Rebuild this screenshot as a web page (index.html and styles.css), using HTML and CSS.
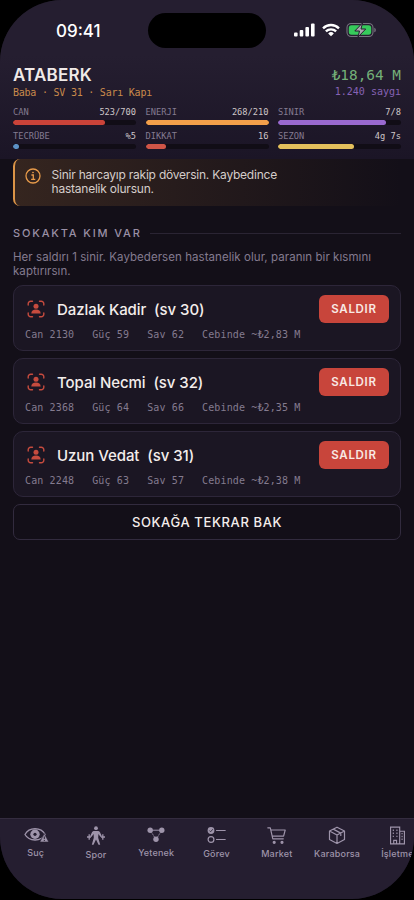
FILE: index.html
```html
<!DOCTYPE html>
<html lang="tr">
<head>
<meta charset="utf-8">
<meta name="viewport" content="width=device-width, initial-scale=1">
<title>Sokak</title>
<link rel="stylesheet" href="styles.css">
</head>
<body>
<svg width="0" height="0" class="defs">
  <symbol id="target" viewBox="0 0 18 18">
    <g fill="none" stroke="currentColor" stroke-width="1.4" stroke-linecap="round">
      <path d="M1.2 5V3.7a2.5 2.5 0 0 1 2.5-2.5H5.500M12.500 1.2h1.8a2.5 2.5 0 0 1 2.5 2.5V5M16.800 13v1.300a2.500 2.500 0 0 1-2.500 2.500H12.500M5.500 16.800H3.700a2.500 2.500 0 0 1-2.500-2.500V13"/>
    </g>
    <circle cx="9" cy="6.300" r="2.500" fill="currentColor"/>
    <path d="M4.300 13.500c0-2.600 1.900-4 4.700-4s4.700 1.400 4.700 4z" fill="currentColor"/>
  </symbol>
</svg>
<div class="phone">
  <header class="top">
    <div class="status">
      <span class="clock">09:41</span>
      <span class="island"></span>
      <span class="signals">
        <svg width="21" height="14" viewBox="0 0 21 14" fill="#fff"><rect x="0" y="9.500" width="3.600" height="4" rx="1"/><rect x="5.700" y="7" width="3.600" height="6.500" rx="1"/><rect x="11.400" y="4" width="3.600" height="9.500" rx="1"/><rect x="17" y="0.500" width="3.600" height="13" rx="1"/></svg>
        <svg width="18" height="14" viewBox="0 0 19 14"><g fill="none" stroke="#fff" stroke-width="2.500"><path d="M1.100 5.200a12 12 0 0 1 16.800 0"/><path d="M4.100 8.500a7.700 7.700 0 0 1 10.800 0"/></g><path d="M9.500 13.500 6.500 10.700a4.300 4.300 0 0 1 6 0z" fill="#fff"/></svg>
        <svg width="31" height="16" viewBox="0 0 31 16"><rect x="1" y="1.500" width="26" height="13" rx="4.200" fill="none" stroke="#77717f" stroke-width="1.100"/><rect x="2.800" y="3.200" width="22.400" height="9.600" rx="2.700" fill="#36ca5b"/><path d="M28.300 5.700c2 .6 2 4 0 4.600z" fill="#77717f"/><path d="M16.500 1 8.800 9h4.700L12 15l7.700-8H15z" fill="#aaa6ad" stroke="#251e30" stroke-width="1"/></svg>
      </span>
    </div>
    <div class="identity">
      <div><h1>ATABERK</h1><p class="rank">Baba · SV 31 · Sarı Kapı</p></div>
      <div class="wealth"><p class="cash">₺18,64 M</p><p class="respect">1.240 saygı</p></div>
    </div>
    <div class="meters">
      <div class="meter"><span>CAN</span><b>523/700</b><i><em class="red" style="width:75%"></em></i></div>
      <div class="meter"><span>ENERJI</span><b>268/210</b><i><em class="orange" style="width:100%"></em></i></div>
      <div class="meter"><span>SINIR</span><b>7/8</b><i><em class="purple" style="width:87.500%"></em></i></div>
      <div class="meter"><span>TECRÜBE</span><b>%5</b><i><em class="blue" style="width:5%"></em></i></div>
      <div class="meter"><span>DIKKAT</span><b>16</b><i><em class="coral" style="width:16.500%"></em></i></div>
      <div class="meter"><span>SEZON</span><b>4g 7s</b><i><em class="yellow" style="width:61.500%"></em></i></div>
    </div>
  </header>
  <main>
    <section class="notice">
      <svg width="16" height="16" viewBox="0 0 16 16" fill="none" stroke="#e79a4a" stroke-width="1.300"><circle cx="8" cy="8" r="7"/><path d="M6.400 7h1.900v4.300M6.100 11.400h4.200"/><circle cx="8" cy="4.500" r=".5" fill="#e79a4a" stroke-width=".8"/></svg>
      <p>Sinir harcayıp rakip döversin. Kaybedince<br>hastanelik olursun.</p>
    </section>
    <h2><span>SOKAKTA KIM VAR</span></h2>
    <p class="hint">Her saldırı 1 sinir. Kaybedersen hastanelik olur, paranın bir kısmını<br>kaptırırsın.</p>
    <div class="list">
      <article class="card">
        <div class="row"><svg width="18" height="18"><use href="#target"/></svg><h3>Dazlak Kadir&nbsp; (sv 30)</h3><button class="attack">SALDIR</button></div>
        <div class="stats"><span>Can 2130</span><span>Güç 59</span><span>Sav 62</span><span>Cebinde ~₺2,83 M</span></div>
      </article>
      <article class="card">
        <div class="row"><svg width="18" height="18"><use href="#target"/></svg><h3>Topal Necmi&nbsp; (sv 32)</h3><button class="attack">SALDIR</button></div>
        <div class="stats"><span>Can 2368</span><span>Güç 64</span><span>Sav 66</span><span>Cebinde ~₺2,35 M</span></div>
      </article>
      <article class="card">
        <div class="row"><svg width="18" height="18"><use href="#target"/></svg><h3>Uzun Vedat&nbsp; (sv 31)</h3><button class="attack">SALDIR</button></div>
        <div class="stats"><span>Can 2248</span><span>Güç 63</span><span>Sav 57</span><span>Cebinde ~₺2,38 M</span></div>
      </article>
      <button class="refresh">SOKAĞA TEKRAR BAK</button>
    </div>
  </main>
  <nav>
    <a class="h18"><svg width="26" height="18" viewBox="-1 0 26 18"><path d="M1 8.500C5 .8 17 .8 21.200 8.500 17 15.800 5 15.800 1 8.500z" fill="none" stroke="currentColor" stroke-width="1.300"/><circle cx="11" cy="8.300" r="4.700" fill="currentColor"/><circle cx="11" cy="8.300" r="1.600" fill="#251e30"/><path d="m20.300 7.600 4.500 8.400h-9z" fill="currentColor" stroke="#251e30" stroke-width=".6"/><path d="M20.300 10.500v2.600m0 .9v1" stroke="#251e30" stroke-width="1"/></svg><span>Suç</span></a>
    <a class="h20"><svg width="20" height="20" viewBox="0 0 20 20" fill="currentColor"><circle cx="10" cy="2.200" r="1.900"/><path d="M7.600 5h4.800q1.200.3 1.700 1.500l1.800 3.700-1.300.8-2.200-3-.2 3.700 2 7.100h-1.700L10 13.400 7.500 18.800H5.800l2-7.100-.2-3.700-2.200 3-1.300-.8 1.800-3.700Q6.400 5.300 7.600 5z"/><path d="M1 11h4M15 11h4M3.200 8.300v5.400M16.800 8.300v5.400" fill="none" stroke="currentColor" stroke-width="1.300"/></svg><span>Spor</span></a>
    <a class="h18"><svg width="18" height="18" viewBox="0 0 18 18" fill="currentColor"><circle cx="3.200" cy="4.200" r="2.700"/><circle cx="14.800" cy="4.200" r="2.700"/><circle cx="9" cy="13.200" r="2.700"/><path d="M5.500 4.200h7" stroke="currentColor" stroke-width="1"/><path d="m4.500 6.300 3 4.800m6-4.800-3 4.800" stroke="currentColor" stroke-width=".9" stroke-dasharray="1.500 .7"/></svg><span>Yetenek</span></a>
    <a class="h19"><svg width="19" height="19" viewBox="0 0 19 19"><circle cx="4" cy="4.500" r="3.400" fill="currentColor"/><path d="m2.400 4.500 1.200 1.300 2.200-2.600" fill="none" stroke="#251e30" stroke-width=".8"/><circle cx="4" cy="13.500" r="2.900" fill="none" stroke="currentColor" stroke-width="1.200"/><path d="M9.500 4.500h8.700M9.500 13.500h8.700" stroke="currentColor" stroke-width="1.200" stroke-linecap="round"/></svg><span>Görev</span></a>
    <a class="h19"><svg width="19" height="19" viewBox="0 0 19 19" fill="none" stroke="currentColor" stroke-width="1.200" stroke-linecap="round" stroke-linejoin="round"><path d="M.8 1.800h2.500l2.500 11h10.500M3.900 4h14.300l-1.600 6.200H5.200"/><circle cx="7.200" cy="16.300" r="1" fill="currentColor"/><circle cx="15" cy="16.300" r="1" fill="currentColor"/></svg><span>Market</span></a>
    <a class="h19"><svg width="18" height="19" viewBox="0 0 18 19" fill="none" stroke="currentColor" stroke-width="1.200" stroke-linejoin="round"><path d="M9 1.200 16.500 5v8.500L9 17.500 1.500 13.500V5zM1.500 5 9 9l7.500-4M9 9v8.500M5.200 3.100l7.600 4v3"/></svg><span>Karaborsa</span></a>
    <a class="h19"><svg width="17" height="20" viewBox="0 0 17 20" fill="none" stroke="currentColor" stroke-width="1.200"><path d="M1.200 18.800V1.200h9.600v17.600zM10.800 5.500h5v13.300h-5M4.500 18.500v-3.300h3v3.300"/><path d="M3.500 4.500h1.200m2.600 0h1.200m-5 3.200h1.200m2.600 0h1.200m-5 3.200h1.200m2.600 0h1.200m4.200-2.900h1.200m-1.200 3h1.200m-1.200 3h1.200" stroke-width="1.500"/></svg><span>İşletme</span></a>
  </nav>
</div>
</body>
</html>
```
FILE: styles.css
```css
* { box-sizing: border-box; margin: 0; padding: 0; }
body { background: #000; width: 414px; height: 900px; overflow: hidden; font-family: Inter, sans-serif; }
.defs { position: absolute; }
svg { display: block; flex: none; }
.phone { width: 414px; height: 899px; border-radius: 62px; overflow: hidden; background: #130f18; display: flex; flex-direction: column; }
.top { height: 159px; flex: none; padding: 0 13px; background: linear-gradient(#251e30 0, #251e30 35%, #1b1526 100%); }
.status { height: 65px; display: grid; grid-template-columns: 135px 118px 1fr; align-items: start; }
.clock { color: #fff; font-size: 17px; font-weight: 500; line-height: 20px; padding: 21px 0 0 43px; letter-spacing: 0; }
.island { height: 35px; margin-top: 13px; border-radius: 18px; background: #000; }
.signals { display: flex; align-items: center; gap: 6.500px; padding: 22px 0 0 28px; }
.identity { display: flex; justify-content: space-between; height: 41px; }
h1 { font-size: 17px; line-height: 21px; font-weight: 600; color: #f0eae8; letter-spacing: .2px; }
.rank, .wealth, .meter, .stats { font-family: "DejaVu Sans Mono", monospace; }
.rank { font-size: 10px; line-height: 13px; letter-spacing: -.23px; color: #c98a4b; }
.wealth { text-align: right; }
.cash { font-size: 14.400px; line-height: 21px; color: #74b078; }
.respect { font-size: 10px; line-height: 11px; color: #8662b5; }
.meters { display: grid; grid-template-columns: repeat(3, 1fr); column-gap: 9.500px; row-gap: 5px; }
.meter { display: grid; grid-template-columns: 1fr auto; font-size: 8.700px; line-height: 12px; row-gap: 2px; color: #847b91; }
.meter b { font-weight: 400; color: #cec6c8; }
.meter i { grid-column: 1 / 3; height: 5px; border-radius: 3px; background: #110d16; overflow: hidden; }
.meter em { display: block; height: 5px; border-radius: 3px; }
.red { background: #ca4339; } .orange { background: #f39f4a; } .purple { background: #9969cf; }
.blue { background: #5c91c5; } .coral { background: #cf5547; } .yellow { background: #e4c05c; }
main { flex: 1; padding: 0 13px; }
.notice { height: 47px; border-left: 2px solid #db9447; border-radius: 7px; background: linear-gradient(90deg, #35251f, #130f18); display: flex; gap: 10.500px; padding: 9px 0 0 10px; color: #d5cdca; font-size: 12px; line-height: 14.300px; letter-spacing: -.22px; }
h2 { display: flex; align-items: center; gap: 8px; margin-top: 20px; height: 14px; font-size: 11px; font-weight: 500; letter-spacing: 1.850px; color: #9a90a5; }
h2::after { content: ""; flex: 1; height: 1px; background: #2a2433; }
.hint { margin-top: 10px; height: 35px; font-size: 11.500px; line-height: 14px; letter-spacing: .06px; color: #847b8f; white-space: nowrap; }
.list { display: flex; flex-direction: column; gap: 7px; }
.card { height: 66px; border: 1px solid #2d2639; border-radius: 10px; background: #1b1623; padding: 9px 11px 0; }
.row { display: flex; align-items: center; height: 29px; padding-left: 2px; color: #c64b3e; }
.row svg { margin-top: -1px; }
h3 { flex: 1; padding-left: 12px; font-size: 15px; line-height: 18px; font-weight: 500; letter-spacing: -.07px; color: #f3edeb; }
.attack { width: 70px; height: 28px; margin-top: -1px; border: 0; border-radius: 6px; background: #c8453b; color: #f8e9e4; font: 600 11.500px Inter, sans-serif; letter-spacing: .7px; }
.stats { display: flex; gap: 18px; margin-top: 4px; font-size: 10px; line-height: 13px; letter-spacing: .13px; color: #847b8f; }
.refresh { height: 36px; border: 1px solid #322b3e; border-radius: 7px; background: transparent; color: #f3edeb; font: 500 13px/16px Inter, sans-serif; letter-spacing: .62px; padding-bottom: 1px; }
nav { height: 81px; flex: none; border-top: 1px solid #342c3f; background: #251e30; display: grid; grid-template-columns: repeat(7, 60.300px); padding: 7px 0 0 5.500px; }
nav a { display: flex; flex-direction: column; align-items: center; gap: 3px; color: #9e94aa; font-size: 9px; line-height: 12px; font-weight: 500; letter-spacing: .2px; white-space: nowrap; }
.h18 svg { height: 18px; } .h19 svg { height: 19px; } .h20 svg { height: 20px; }
```
